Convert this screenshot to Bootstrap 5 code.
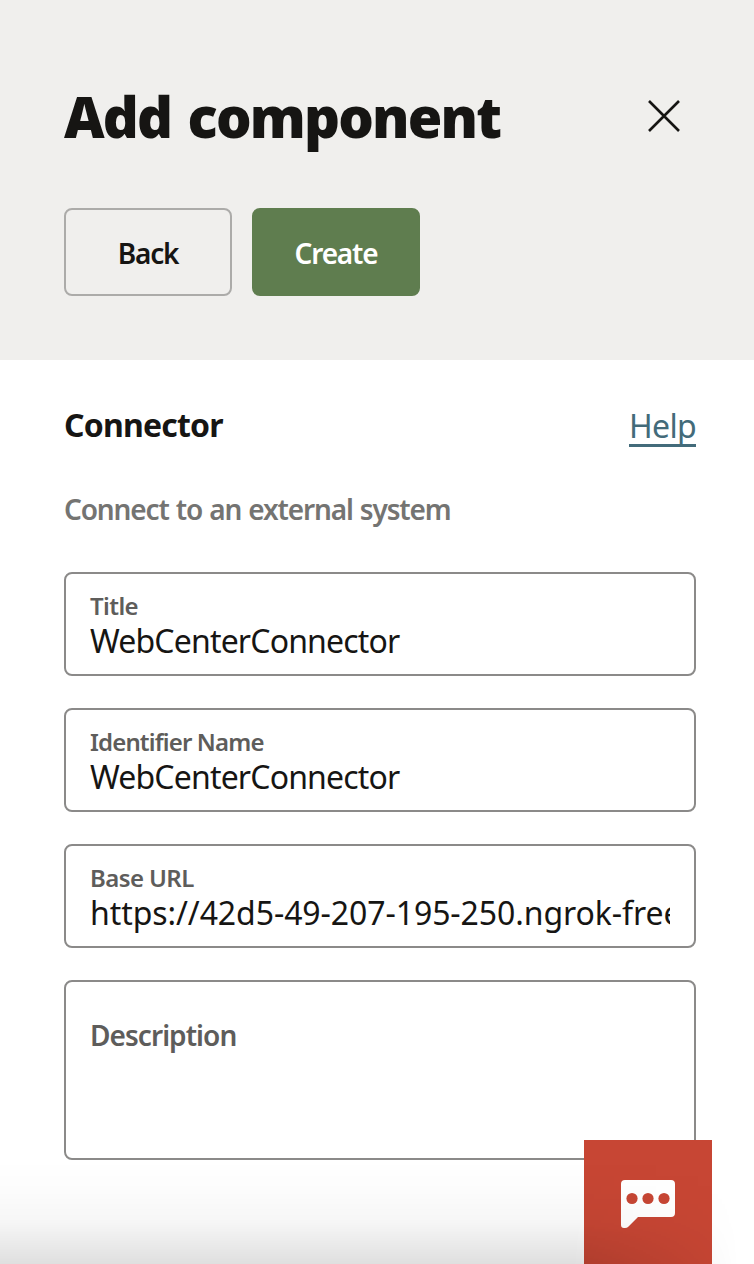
<!DOCTYPE html>
<html lang="en">
<head>
<meta charset="utf-8">
<meta name="viewport" content="width=device-width, initial-scale=1">
<title>Add component</title>
<link href="https://cdn.jsdelivr.net/npm/bootstrap@5.3.0/dist/css/bootstrap.min.css" rel="stylesheet">
<style>
  body { font-family: "Noto Sans", "Open Sans", sans-serif; color: #161513; background: #fff; }
  .panel { height: 1264px; }
  .panel-head { height: 360px; background: #f0efed; padding: 78px 74px 0 64px; }
  .panel-title { font-size: 56px; line-height: 76px; font-weight: 900; letter-spacing: -1.8px; word-spacing: 3.5px; }
  .close-x { width: 32px; height: 32px; }
  .actions { gap: 20px; margin-top: 54px; }
  .action { width: 168px; height: 88px; border-width: 2px; border-radius: 8px; font-size: 28px; font-weight: 600; padding: 1px 0 0; letter-spacing: -1.2px; }
  .action-back { border-color: #acaba9; color: #161513; }
  .action-create { background: #5f7d4f; border-color: #5f7d4f; color: #fff; }
  .panel-main { padding: 43px 58px 0 64px; }
  .kind { font-size: 32px; line-height: 44px; font-weight: 700; letter-spacing: -.8px; }
  .help { font-size: 32px; line-height: 40px; height: 41px; color: #436b7a; border-bottom: 3px solid #436b7a; letter-spacing: -.7px; margin-top: 3px; }
  .hint { font-size: 28px; line-height: 40px; font-weight: 600; color: #747472; letter-spacing: -1.15px; word-spacing: 1px; margin: 42px 0 43px; }
  .field { height: 104px; border: 2px solid #8b8a89; border-radius: 8px; padding: 15px 24px 0; margin-bottom: 32px; background: #fff; }
  .field-tall { height: 180px; }
  .field label { display: block; font-size: 24px; line-height: 34px; font-weight: 600; color: #5e5d5b; letter-spacing: -.6px; }
  .field .label-tight { letter-spacing: -.85px; }
  .field-tall label { font-size: 28px; line-height: 42px; font-weight: 600; letter-spacing: -.95px; }
  .field input, .field textarea { display: block; width: 100%; border: 0; padding: 0; margin-top: -4px; background: transparent; outline: 0; color: #161513; font-size: 32px; line-height: 44px; height: 44px; letter-spacing: -.83px; resize: none; }
  .field .url { letter-spacing: -.08px; }
  .shade { height: 104px; background: linear-gradient(#0000, rgba(0,0,0,.012) 30%, rgba(0,0,0,.035) 60%, rgba(0,0,0,.125)); -webkit-mask-image: linear-gradient(90deg, #000 76%, transparent 98%); mask-image: linear-gradient(90deg, #000 76%, transparent 98%); pointer-events: none; }
  .chat { width: 128px; height: 124px; right: 42px; background: #c74634; border: 0; padding: 38px 0 0 35px; }
</style>
</head>
<body>
<div class="panel position-relative overflow-hidden">
  <header class="panel-head">
    <div class="d-flex justify-content-between align-items-center">
      <h1 class="panel-title m-0">Add component</h1>
      <button class="btn p-0 border-0 d-flex" aria-label="Close"><svg class="close-x" viewBox="0 0 32 32" fill="none" stroke="#161513" stroke-width="2.6"><path d="M1 1 31 31M31 1 1 31"/></svg></button>
    </div>
    <div class="actions d-flex">
      <button class="btn action action-back">Back</button>
      <button class="btn action action-create">Create</button>
    </div>
  </header>
  <main class="panel-main">
    <div class="d-flex justify-content-between align-items-start">
      <h2 class="kind m-0">Connector</h2>
      <a class="help text-decoration-none" href="#">Help</a>
    </div>
    <p class="hint">Connect to an external system</p>
    <div class="field"><label for="t">Title</label><input id="t" value="WebCenterConnector"></div>
    <div class="field"><label for="n" class="label-tight">Identifier Name</label><input id="n" value="WebCenterConnector"></div>
    <div class="field"><label for="u">Base URL</label><input id="u" class="url" value="https://42d5-49-207-195-250.ngrok-free.app"></div>
    <div class="field field-tall pt-3"><label for="d" class="mt-3">Description</label><textarea id="d"></textarea></div>
  </main>
  <button class="chat position-absolute bottom-0 d-flex" aria-label="Chat">
    <svg width="58" height="52" viewBox="0 0 58 52"><path d="M6 2h46q4 0 4 4v29q0 4-4 4H19L9 49q-1 1-3 1H5q-3 0-3-3V6q0-4 4-4Z" fill="#fff"/><g fill="#c74634"><circle cx="13" cy="20.5" r="5.6"/><circle cx="29" cy="20.5" r="5.6"/><circle cx="45" cy="20.5" r="5.6"/></g></svg>
  </button>
  <div class="shade position-absolute bottom-0 start-0 end-0"></div>
</div>
<script src="https://cdn.jsdelivr.net/npm/bootstrap@5.3.0/dist/js/bootstrap.bundle.min.js"></script>
</body>
</html>
